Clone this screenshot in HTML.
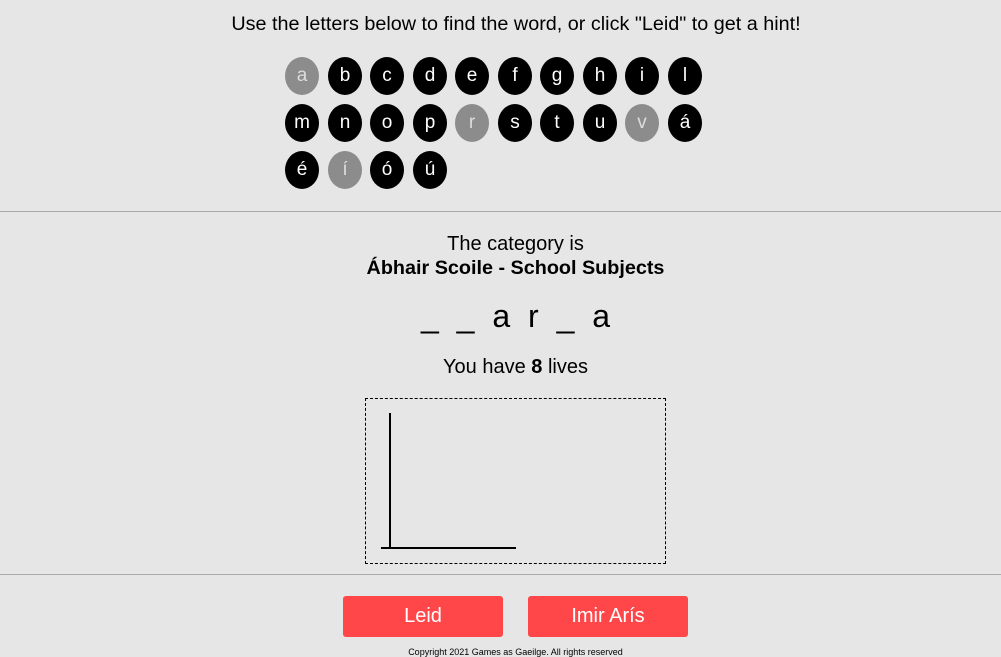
<!DOCTYPE html>
<html><head><meta charset="utf-8"><style>
body{margin:0;width:1001px;height:657px;background:#e6e6e6;font-family:"Liberation Sans",Arial,sans-serif;position:relative;overflow:hidden;color:#000}
.a{position:absolute;white-space:nowrap}
.c{position:absolute;width:34px;height:38px;border-radius:50%;background:#000;color:#fff;font-size:19px;line-height:38px;text-align:center}
.g{background:#8c8c8c;color:#ddd}
.hr{position:absolute;left:0;width:1001px;height:1px;background:#aaa}
.btn{position:absolute;top:596px;width:160px;height:41px;background:#ff474a;border-radius:3px;color:#fff;font-size:20px;line-height:41px;text-align:center}
</style></head><body>
<div class="a" style="left:0;width:1032px;text-align:center;top:13px;font-size:19.8px">Use the letters below to find the word, or click "Leid" to get a hint!</div>
<div class="c g" style="left:285px;top:57px">a</div>
<div class="c" style="left:328px;top:57px">b</div>
<div class="c" style="left:370px;top:57px">c</div>
<div class="c" style="left:413px;top:57px">d</div>
<div class="c" style="left:455px;top:57px">e</div>
<div class="c" style="left:498px;top:57px">f</div>
<div class="c" style="left:540px;top:57px">g</div>
<div class="c" style="left:583px;top:57px">h</div>
<div class="c" style="left:625px;top:57px">i</div>
<div class="c" style="left:668px;top:57px">l</div>
<div class="c" style="left:285px;top:104px">m</div>
<div class="c" style="left:328px;top:104px">n</div>
<div class="c" style="left:370px;top:104px">o</div>
<div class="c" style="left:413px;top:104px">p</div>
<div class="c g" style="left:455px;top:104px">r</div>
<div class="c" style="left:498px;top:104px">s</div>
<div class="c" style="left:540px;top:104px">t</div>
<div class="c" style="left:583px;top:104px">u</div>
<div class="c g" style="left:625px;top:104px">v</div>
<div class="c" style="left:668px;top:104px">á</div>
<div class="c" style="left:285px;top:151px">é</div>
<div class="c g" style="left:328px;top:151px">í</div>
<div class="c" style="left:370px;top:151px">ó</div>
<div class="c" style="left:413px;top:151px">ú</div>
<div class="hr" style="top:211px"></div>
<div class="a" style="left:0;width:1031px;text-align:center;top:233px;font-size:20px">The category is</div>
<div class="a" style="left:0;width:1031px;text-align:center;top:257px;font-size:19.8px;font-weight:bold">Ábhair Scoile - School Subjects</div>
<div class="a" style="left:0;width:1031px;text-align:center;top:298px;font-size:32px;word-spacing:9px">_ _ a r _ a</div>
<div class="a" style="left:0;width:1031px;text-align:center;top:356px;font-size:20px">You have <b>8</b> lives</div>
<div class="a" style="left:365px;top:398px;width:299px;height:164px;border:1px dashed #000"></div>
<div class="a" style="left:389px;top:413px;width:2px;height:136px;background:#000"></div>
<div class="a" style="left:381px;top:547px;width:135px;height:2px;background:#000"></div>
<div class="hr" style="top:574px"></div>
<div class="btn" style="left:343px">Leid</div>
<div class="btn" style="left:528px">Imir Arís</div>
<div class="a" style="left:0;width:1031px;text-align:center;top:647px;font-size:9px">Copyright 2021 Games as Gaeilge. All rights reserved</div>
</body></html>
